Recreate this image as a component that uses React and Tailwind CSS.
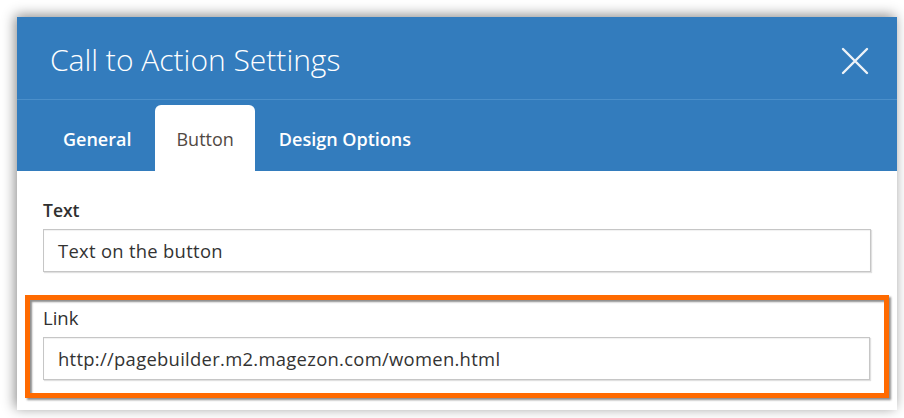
import React from "react";

const tabs = [
  { label: "General", active: false },
  { label: "Button", active: true },
  { label: "Design Options", active: false },
];

function Field({ label, value, bold }) {
  return (
    <div>
      <div className={`leading-[24px] text-[#303030] ${bold ? "text-[17.5px] font-semibold" : "text-[18.5px] font-normal"}`}>{label}</div>
      <div className="mt-[7px] h-[43px] border border-[#c6c6c6] bg-white shadow-[inset_0_1px_1px_rgba(0,0,0,0.06),1px_1px_1px_rgba(0,0,0,0.12)] flex items-center px-[14px] text-[18.4px] tracking-[0.3px] text-[#333]">
        {value}
      </div>
    </div>
  );
}

export default function App() {
  return (
    <div className="w-[904px] h-[418px] bg-white pt-[17px] pl-[17px] overflow-hidden" style={{ fontFamily: '"Open Sans", sans-serif' }}>
      <div className="w-[880px] h-[393px] bg-white shadow-[-2px_-2px_12px_rgba(0,0,0,0.45)] flex flex-col">
        {/* header */}
        <div className="bg-[#337cbd]">
          <div className="h-[83px] flex items-center justify-between pl-[33px] pr-[28px] pt-[6px] border-b border-[#4b8fca]">
            <h1 className="text-[30px] font-light text-white leading-none pb-[2px]">Call to Action Settings</h1>
            <svg width="28" height="28" viewBox="0 0 28 28" className="text-[#eef3f8]">
              <path d="M2 2 L26 26 M26 2 L2 26" stroke="currentColor" strokeWidth="2.4" strokeLinecap="round" />
            </svg>
          </div>
          <div className="h-[71px] flex items-end pl-[25px] gap-[3px]">
            {tabs.map((t) => (
              <div
                key={t.label}
                className={`h-[66px] px-[21px] pt-[3px] flex items-center text-[18px] rounded-t-[6px] ${
                  t.active ? "bg-white text-[#514943] font-normal" : "text-white font-semibold"
                }`}
              >
                {t.label}
              </div>
            ))}
          </div>
        </div>

        {/* body */}
        <div className="flex-1 pt-[27px]">
          <div className="px-[26px]">
            <Field label="Text" value="Text on the button" bold />
          </div>
          <div className="mt-[23px] mx-[8px] border-[5px] border-[#ff6a00] shadow-[2px_2px_2px_rgba(0,0,0,0.45),inset_2px_2px_2px_rgba(0,0,0,0.45)] pt-[6px] pb-[13px] pl-[13px] pr-[14px]">
            <Field label="Link" value="http://pagebuilder.m2.magezon.com/women.html" />
          </div>
        </div>
      </div>
    </div>
  );
}
